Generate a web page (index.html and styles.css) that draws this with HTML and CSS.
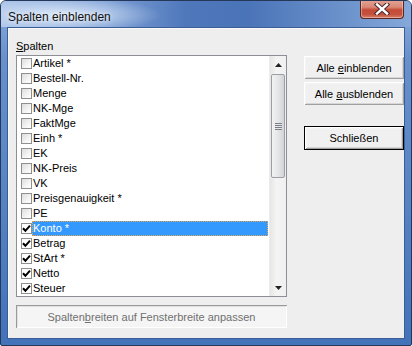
FILE: index.html
```html
<!DOCTYPE html>
<html lang="de">
<head>
<meta charset="utf-8">
<title>Spalten einblenden</title>
<link rel="stylesheet" href="styles.css">
</head>
<body>
<div class="window">
  <div class="titlebar">
    <span class="title">Spalten einblenden</span>
    <div class="close">
      <svg width="16" height="12" viewBox="0 0 16 12">
        <path d="M3 1.5 L13 10.5 M13 1.5 L3 10.5" stroke="#4a2a2a" stroke-width="4.4" stroke-linecap="square"/>
        <path d="M3 1.5 L13 10.5 M13 1.5 L3 10.5" stroke="#ffffff" stroke-width="2.4" stroke-linecap="square"/>
      </svg>
    </div>
  </div>
  <div class="client">
    <div class="leftcol">
      <div class="label"><u>S</u>palten</div>
      <div class="listbox">
        <div class="items">
          <div class="row"><span class="cb"></span><span class="txt">Artikel *</span></div>
          <div class="row"><span class="cb"></span><span class="txt">Bestell-Nr.</span></div>
          <div class="row"><span class="cb"></span><span class="txt">Menge</span></div>
          <div class="row"><span class="cb"></span><span class="txt">NK-Mge</span></div>
          <div class="row"><span class="cb"></span><span class="txt">FaktMge</span></div>
          <div class="row"><span class="cb"></span><span class="txt">Einh *</span></div>
          <div class="row"><span class="cb"></span><span class="txt">EK</span></div>
          <div class="row"><span class="cb"></span><span class="txt">NK-Preis</span></div>
          <div class="row"><span class="cb"></span><span class="txt">VK</span></div>
          <div class="row"><span class="cb"></span><span class="txt">Preisgenauigkeit *</span></div>
          <div class="row"><span class="cb"></span><span class="txt">PE</span></div>
          <div class="row"><span class="cb checked"><svg width="9" height="9" viewBox="0 0 9 9"><path d="M1 4.2 L3.4 6.8 L8 1.6" fill="none" stroke="#000" stroke-width="2"/></svg></span><span class="txt sel">Konto *</span></div>
          <div class="row"><span class="cb checked"><svg width="9" height="9" viewBox="0 0 9 9"><path d="M1 4.2 L3.4 6.8 L8 1.6" fill="none" stroke="#000" stroke-width="2"/></svg></span><span class="txt">Betrag</span></div>
          <div class="row"><span class="cb checked"><svg width="9" height="9" viewBox="0 0 9 9"><path d="M1 4.2 L3.4 6.8 L8 1.6" fill="none" stroke="#000" stroke-width="2"/></svg></span><span class="txt">StArt *</span></div>
          <div class="row"><span class="cb checked"><svg width="9" height="9" viewBox="0 0 9 9"><path d="M1 4.2 L3.4 6.8 L8 1.6" fill="none" stroke="#000" stroke-width="2"/></svg></span><span class="txt">Netto</span></div>
          <div class="row"><span class="cb checked"><svg width="9" height="9" viewBox="0 0 9 9"><path d="M1 4.2 L3.4 6.8 L8 1.6" fill="none" stroke="#000" stroke-width="2"/></svg></span><span class="txt">Steuer</span></div>
        </div>
        <div class="scrollbar">
          <div class="sbtn"><svg width="7" height="4" viewBox="0 0 7 4"><path d="M0 4 L3.5 0 L7 4 Z" fill="#222"/></svg></div>
          <div class="track">
            <div class="thumb"><span class="grip"></span></div>
          </div>
          <div class="sbtn"><svg width="7" height="4" viewBox="0 0 7 4"><path d="M0 0 L3.5 4 L7 0 Z" fill="#222"/></svg></div>
        </div>
      </div>
      <div class="btn wide disabled"><span>Spalten<u>b</u>reiten auf Fensterbreite anpassen</span></div>
    </div>
    <div class="rightcol">
      <div class="btn"><span>Alle <u>e</u>inblenden</span></div>
      <div class="btn"><span>Alle <u>a</u>usblenden</span></div>
      <div class="btn default"><span>Schließen</span></div>
    </div>
  </div>
</div>
</body>
</html>
```

FILE: styles.css
```css
html, body {
  margin: 0;
  padding: 0;
  background: #ffffff;
}

.window {
  width: 412px;
  height: 346px;
  box-sizing: border-box;
  border: 1px solid #26385a;
  border-radius: 6px 6px 2px 2px;
  display: flex;
  flex-direction: column;
  background:
    linear-gradient(to bottom, #97b6e2 0px, #7ba0d6 26px, #6790cc 60px, #5583c4 200px, #4272b8 100%);
  font-family: "Liberation Sans", Arial, sans-serif;
  font-size: 11px;
  color: #000;
  overflow: hidden;
}

.titlebar {
  height: 26px;
  display: flex;
  align-items: flex-start;
  background:
    radial-gradient(ellipse 100px 18px at 60px 14px, rgba(225,236,250,0.95), rgba(225,236,250,0) 100%),
    linear-gradient(to right, #a8c2e8 0%, #7fa1d6 25%, #4f78bb 45%, #4a74b8 60%, #6e94cd 85%, #86a8da 100%);
}

.title {
  font-size: 12px;
  line-height: 15px;
  margin: 9px 0 0 7px;
  color: #111;
  text-shadow: 0 0 4px rgba(255,255,255,0.9);
}

.close {
  margin: -1px 7px 0 auto;
  width: 44px;
  height: 19px;
  box-sizing: border-box;
  border: 1px solid #5a2620;
  border-top: none;
  border-radius: 0 0 4px 4px;
  background: linear-gradient(to bottom, #e3a495 0%, #d88775 40%, #c54a36 55%, #c4513d 80%, #d8806a 100%);
  box-shadow: inset 0 0 0 1px rgba(255,220,210,0.45);
  display: flex;
  align-items: center;
  justify-content: center;
}

.client {
  margin: 0 6px 6px 6px;
  flex: 1;
  border: 1px solid #3a5d96;
  background: #eeeeee;
  display: flex;
  padding: 11px 0 0 8px;
  box-shadow: inset 1px 1px 0 #f8f8f8;
}

.leftcol {
  width: 271px;
  display: flex;
  flex-direction: column;
}

.label {
  line-height: 14px;
  height: 14px;
}

.listbox {
  margin-top: 2px;
  height: 242px;
  box-sizing: border-box;
  border: 1px solid #8e8f94;
  background: #ffffff;
  display: flex;
}

.items {
  flex: 1;
  display: flex;
  flex-direction: column;
}

.row {
  height: 15px;
  display: flex;
  align-items: center;
}

.cb {
  width: 11px;
  height: 11px;
  box-sizing: border-box;
  margin-left: 4px;
  border: 1px solid #8f8f8f;
  background: linear-gradient(135deg, #dcdcdc 0%, #f4f4f4 60%, #ffffff 100%);
  display: flex;
  align-items: center;
  justify-content: center;
}

.cb.checked {
  background: #ffffff;
}

.txt {
  flex: 1;
  height: 15px;
  line-height: 15px;
  padding-left: 1px;
  box-sizing: border-box;
  margin-right: 1px;
  white-space: nowrap;
}

.txt.sel {
  background: #3399ff;
  color: #ffffff;
  border: 1px dotted #e9a64a;
  line-height: 13px;
  padding-left: 0;
}

.scrollbar {
  width: 17px;
  display: flex;
  flex-direction: column;
  background: linear-gradient(to right, #e6e6e6, #f4f4f4 40%, #f0f0f0 100%);
  border-left: 1px solid #ececec;
  box-sizing: border-box;
}

.sbtn {
  height: 17px;
  display: flex;
  align-items: center;
  justify-content: center;
}

.track {
  flex: 1;
  display: flex;
  flex-direction: column;
  padding-top: 1px;
}

.thumb {
  height: 104px;
  margin: 0 1px;
  box-sizing: border-box;
  border: 1px solid #9b9ea4;
  border-radius: 2px;
  background: linear-gradient(to right, #f2f2f2 0%, #e6e6e6 50%, #d2d4d8 100%);
  display: flex;
  align-items: center;
  justify-content: center;
}

.grip {
  width: 7px;
  height: 7px;
  background: repeating-linear-gradient(to bottom, #7a7e86 0px, #7a7e86 1px, #e8e8e8 1px, #e8e8e8 2px);
}

.btn {
  height: 23px;
  box-sizing: border-box;
  display: flex;
  align-items: center;
  justify-content: center;
  background: #f0f0f0;
  box-shadow:
    inset 1px 1px 0 #ffffff,
    inset -1px -1px 0 #a0a0a0,
    inset 2px 2px 0 #f4f4f4,
    inset -2px -2px 0 #d6d6d6;
  white-space: nowrap;
}

.btn.wide {
  margin-top: 8px;
  width: 271px;
}

.btn.disabled {
  color: #707070;
  background: #f5f5f5;
  box-shadow:
    inset 1px 1px 0 #9a9a9a,
    inset -1px -1px 0 #ffffff,
    inset 2px 2px 0 #e0e0e0;
}

.rightcol {
  margin-left: 17px;
  padding-top: 17px;
  width: 101px;
  display: flex;
  flex-direction: column;
}

.rightcol .btn + .btn {
  margin-top: 3px;
}

.rightcol .btn.default {
  margin-top: 21px;
  height: 24px;
  border: 1px solid #000;
}
```
